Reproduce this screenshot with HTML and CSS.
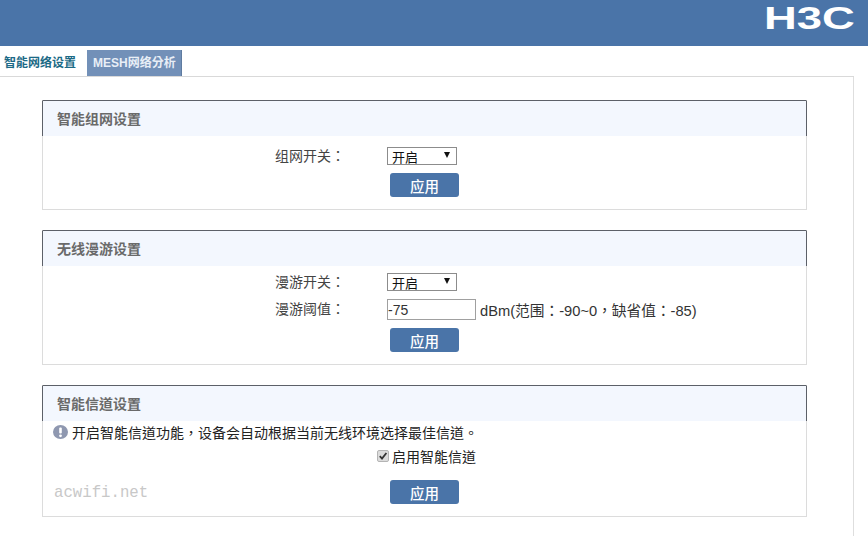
FILE: index.html
```html
<!DOCTYPE html>
<html lang="zh-CN">
<head>
<meta charset="utf-8">
<title>智能网络设置</title>
<link rel="stylesheet" href="styles.css">
</head>
<body>
<header class="topbar">
  <svg class="logo" width="100" height="46" viewBox="0 0 100 46" role="img" aria-label="H3C">
    <text transform="scale(1.42 1)" x="0" y="29" class="logo-text">H3C</text>
  </svg>
</header>
<nav class="tabs">
  <a class="tab tab-active">智能网络设置</a>
  <a class="tab tab-idle">MESH网络分析</a>
</nav>
<main class="content">
  <section class="panel panel-one">
    <h2 class="panel-title">智能组网设置</h2>
    <div class="row row-first">
      <span class="label">组网开关：</span>
      <span class="fake-select">开启<i class="arrow"></i></span>
    </div>
    <div class="actions actions-one"><button class="apply">应用</button></div>
  </section>
  <section class="panel panel-two">
    <h2 class="panel-title">无线漫游设置</h2>
    <div class="row row-second">
      <span class="label">漫游开关：</span>
      <span class="fake-select">开启<i class="arrow"></i></span>
    </div>
    <div class="row row-threshold">
      <span class="label">漫游阈值：</span>
      <input class="num" type="text" value="-75">
      <span class="hint">dBm(范围：-90~0，缺省值：-85)</span>
    </div>
    <div class="actions actions-two"><button class="apply">应用</button></div>
  </section>
  <section class="panel panel-three">
    <h2 class="panel-title">智能信道设置</h2>
    <p class="notice">
      <svg class="notice-icon" width="15" height="14" viewBox="0 0 15 14"><ellipse cx="7.5" cy="7" rx="7.5" ry="7" fill="#8f98b0"/><rect x="6.2" y="2.4" width="2.6" height="6" rx="1" fill="#fff"/><circle cx="7.5" cy="10.8" r="1.4" fill="#fff"/></svg>
      <span>开启智能信道功能，设备会自动根据当前无线环境选择最佳信道。</span>
    </p>
    <div class="check">
      <svg class="check-box" width="12" height="12" viewBox="0 0 12 12"><rect x="0.5" y="0.5" width="11" height="11" rx="1.5" fill="#dcdcdc" stroke="#b4b4b4"/><path d="M2.8 6.2 L5 8.6 L9.4 3" fill="none" stroke="#333" stroke-width="1.8"/></svg>
      <span>启用智能信道</span>
    </div>
    <div class="bottom">
      <span class="watermark">acwifi.net</span>
      <button class="apply">应用</button>
    </div>
  </section>
</main>
</body>
</html>
```
FILE: styles.css
```css
* { box-sizing: border-box; }
html, body { margin: 0; padding: 0; }
body {
  width: 868px;
  height: 536px;
  overflow: hidden;
  background: #fff;
  color: #333;
  font-family: "Liberation Sans", "Noto Sans CJK TC", sans-serif;
  font-size: 14px;
  font-feature-settings: "locl" 0;
}
.topbar {
  height: 46px;
  background: #4a74a8;
  display: flex;
  justify-content: flex-end;
  padding-right: 4px;
}
.logo { display: block; }
.logo-text {
  font-family: "Liberation Sans", sans-serif;
  font-weight: 700;
  font-size: 32px;
  fill: #fff;
}
.tabs {
  display: flex;
  height: 31px;
  padding-top: 4px;
  width: 854px;
  border-bottom: 1px solid #d9d9d9;
}
.tab {
  height: 26px;
  line-height: 27px;
  font-size: 12px;
  font-weight: 700;
  white-space: nowrap;
}
.tab-active { width: 87px; color: #1c6a86; background: #fff; padding-left: 4px; }
.tab-idle { width: 95px; color: #e8eef6; background: #7290b8; padding-left: 6px; border-right: 1px solid #5f7ba0; }
.content {
  width: 854px;
  height: 459px;
  padding: 23px 0 0 42px;
  border-right: 1px solid #dedede;
}
.panel {
  width: 765px;
  border: 1px solid #dcdcdc;
  border-top: 1px solid #5c6068;
  margin-bottom: 20px;
}
.panel-one { height: 110px; }
.panel-two { height: 135px; }
.panel-three { height: 132px; }
.panel-title {
  margin: 0 -1px;
  height: 35px;
  line-height: 36px;
  padding-left: 14px;
  font-size: 14px;
  font-weight: 700;
  color: #6a6a6a;
  background: #f3f7fe;
  border-left: 1px solid #5c6068;
  border-right: 1px solid #5c6068;
}
.row {
  display: flex;
  align-items: center;
  height: 18px;
  padding-left: 232px;
}
.row-first { margin-top: 11px; }
.row-second { margin-top: 7px; }
.row-threshold { margin-top: 8px; height: 21px; }
.label { width: 112px; color: #444; white-space: nowrap; line-height: 18px; margin-top: -1px; }
.fake-select {
  position: relative;
  display: block;
  width: 70px;
  height: 18px;
  line-height: 19px;
  border: 1px solid #8c8c8c;
  background: #fff;
  color: #111;
  padding-left: 4px;
  font-size: 13px;
}
.arrow {
  position: absolute;
  right: 6px;
  top: 4px;
  width: 0;
  height: 0;
  border-left: 3px solid transparent;
  border-right: 3px solid transparent;
  border-top: 6px solid #111;
}
.num {
  width: 89px;
  height: 21px;
  border: 1px solid #a0a0a0;
  padding: 0;
  font: 14px "Liberation Sans", sans-serif;
  color: #333;
  outline: none;
}
.hint { margin-left: 4px; color: #333; font-size: 14.7px; white-space: nowrap; margin-top: -1px; }
.actions { padding-left: 347px; }
.actions-one { margin-top: 8px; }
.actions-two { margin-top: 8px; }
.apply {
  display: block;
  width: 69px;
  height: 24px;
  border: 0;
  border-radius: 3px;
  padding: 0;
  background: #4a74a8;
  color: #fff;
  font: 500 14.5px "Liberation Sans", "Noto Sans CJK SC", sans-serif;
}
.notice {
  margin: 2px 0 0 10px;
  display: flex;
  align-items: center;
  gap: 4px;
  height: 18px;
  color: #222;
  white-space: nowrap;
}
.check {
  display: flex;
  align-items: center;
  height: 18px;
  margin: 6px 0 0 334px;
  color: #222;
}
.check-box { margin-right: 3px; }
.bottom {
  display: flex;
  align-items: center;
  margin-top: 15px;
  padding-left: 11px;
}
.watermark {
  width: 336px;
  font-family: "Liberation Mono", "DejaVu Sans Mono", monospace;
  font-size: 15.7px;
  color: #c8c8c8;
  margin-top: 2px;
}
```
